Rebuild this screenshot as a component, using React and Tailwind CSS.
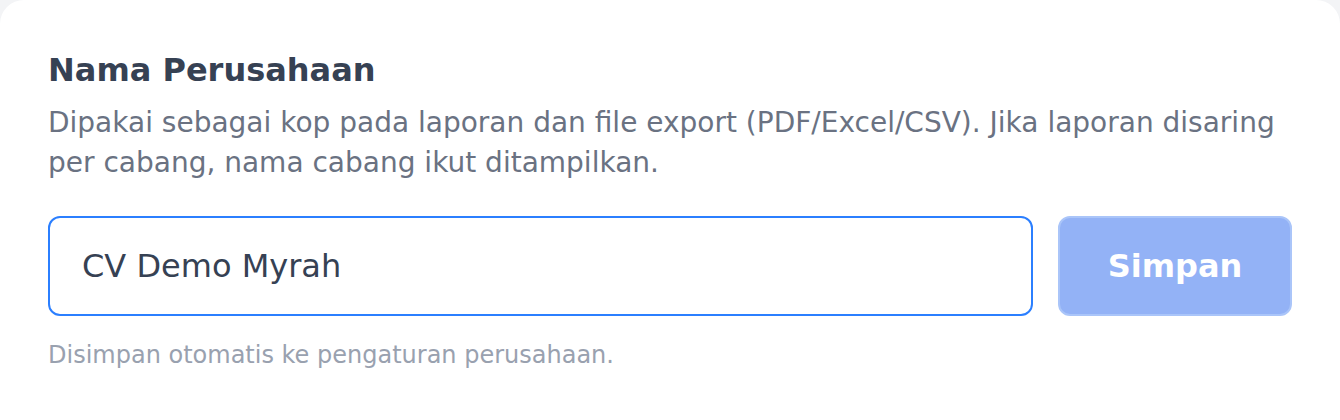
import React, { useState } from 'react';

const App = () => {
  const [name, setName] = useState('CV Demo Myrah');

  return (
    <div className="min-h-[420px] bg-gray-100" style={{ fontFamily: '"DejaVu Sans", sans-serif' }}>
      <div className="rounded-t-[24px] bg-white px-12 pt-[46px] pb-12 min-h-[420px]">
        {/* Heading */}
        <h2 className="text-[32px] leading-[48px] font-bold text-gray-700">Nama Perusahaan</h2>
        <p className="mt-[9px] text-[28px] leading-[40px] text-gray-500">
          Dipakai sebagai kop pada laporan dan file export (PDF/Excel/CSV). Jika laporan disaring per cabang, nama cabang ikut ditampilkan.
        </p>

        {/* Input + button */}
        <div className="mt-[33px] flex items-stretch gap-[25px]">
          <input
            type="text"
            value={name}
            onChange={(e) => setName(e.target.value)}
            className="flex-1 h-[100px] rounded-[12px] border-2 border-blue-500 bg-white px-8 text-[32px] text-gray-700 outline-none"
            style={{ fontFamily: '"DejaVu Sans", sans-serif' }}
          />
          <button
            disabled
            className="w-[234px] h-[100px] rounded-[12px] border-2 border-[#aac5f9] bg-[#93b2f6] text-[32px] font-bold text-white"
            style={{ fontFamily: '"DejaVu Sans", sans-serif' }}
          >
            Simpan
          </button>
        </div>

        <p className="mt-[23px] text-[24px] leading-[32px] text-gray-400">Disimpan otomatis ke pengaturan perusahaan.</p>
      </div>
    </div>
  );
};

export default App;
